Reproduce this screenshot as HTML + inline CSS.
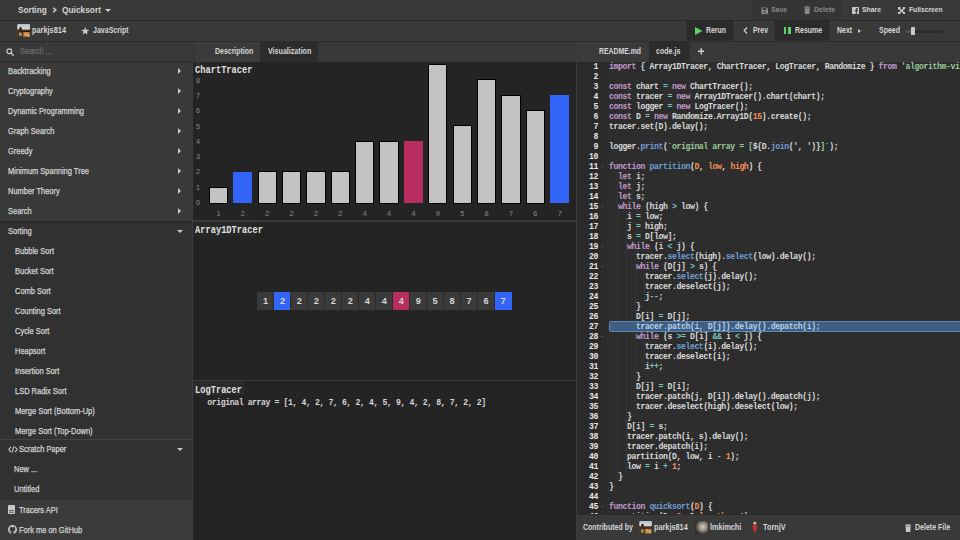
<!DOCTYPE html>
<html><head><meta charset="utf-8">
<style>
*{margin:0;padding:0;box-sizing:border-box}
html,body{width:960px;height:540px;overflow:hidden;background:#393939;font-family:"Liberation Sans",sans-serif;color:#bbb}
.a{position:absolute;white-space:nowrap}
.hdr{position:absolute;left:0;width:960px;background:#393939}
.bd{position:absolute;background:#2b2b2b}
.ht{position:absolute;white-space:nowrap;line-height:10px;font-size:7.1px;font-weight:bold;color:#c8c8c8}
.ht.dim{color:#8a8a8a}
.st{position:absolute;white-space:nowrap;line-height:10px;font-size:8.3px;margin-top:-0.25px;color:#d4d4d4;-webkit-text-stroke-width:0.25px;transform:scaleX(0.9);transform-origin:0 0}
.arr{position:absolute;left:178px;width:0;height:0;border-top:3px solid transparent;border-bottom:3px solid transparent;border-left:3px solid #c8c8c8}
.dn{position:absolute;left:176.8px;width:0;height:0;border-left:3px solid transparent;border-right:3px solid transparent;border-top:3px solid #c8c8c8}
.yl{position:absolute;line-height:10px;font-size:7.3px;color:#8a8a8a;white-space:nowrap}
.xl{position:absolute;width:10px;text-align:center;line-height:10px;font-size:7.3px;color:#8a8a8a}
.tt{position:absolute;white-space:nowrap;line-height:10px;font-family:"Liberation Mono",monospace;font-size:10.3px;color:#e0e0e0;font-weight:bold;transform:scaleX(0.846);transform-origin:0 0}
.cell{position:absolute;top:292px;width:16.97px;height:17.7px;text-align:center;line-height:19.6px;font-size:9.2px;font-weight:bold;color:#d6d6d6}
.lg{position:absolute;white-space:nowrap;line-height:10px;font-family:"Liberation Mono",monospace;font-size:8.2px;letter-spacing:-0.42px;font-weight:bold;color:#d6d6d6}
#code{position:absolute;left:577px;top:62px;width:383px;height:453px;background:#2d2d2d;overflow:hidden}
#code .ln{position:absolute;left:0;width:20.9px;text-align:right;font-size:8.2px;letter-spacing:-0.42px;line-height:10px;color:#e6e6e6;font-weight:bold;font-family:"Liberation Mono",monospace}
#code pre{position:absolute;left:32px;top:0;font-family:"Liberation Mono",monospace;font-size:8.2px;letter-spacing:-0.42px;line-height:10px;color:#dadada;font-weight:bold}
.hl{color:#b8d0ea}.k{color:#c49bd0}.o{color:#74c6c0}.f{color:#6f9fd8}.n{color:#f99157}.s{color:#99cc99}

.tx{position:absolute;white-space:nowrap;line-height:10px;transform-origin:0 0}

</style></head><body>
<div class="hdr" style="top:0;height:20px"></div>
<div class="a" style="left:752px;top:0;width:90px;height:20px;background:#353535"></div>
<div class="bd" style="left:0;top:20px;width:960px;height:1px"></div>
<div class="tx" style="left:17.60px;top:4.72px;font-size:8.6px;font-weight:bold;color:#d6d6d6;transform:scaleX(0.952);">Sorting</div>
<svg class="a" style="left:51.8px;top:6.8px" width="5" height="6" viewBox="0 0 5 6"><path d="M1.1 0.7 L3.8 3 L1.1 5.3" fill="none" stroke="#cfcfcf" stroke-width="1.5"/></svg>
<div class="tx" style="left:62.20px;top:4.72px;font-size:8.6px;font-weight:bold;color:#d6d6d6;transform:scaleX(0.971);">Quicksort</div>
<div class="a" style="left:105.3px;top:8.6px;width:0;height:0;border-left:3.1px solid transparent;border-right:3.1px solid transparent;border-top:3.6px solid #d6d6d6"></div>
<svg class="a" style="left:760.5px;top:6.5px" width="7.4" height="7.4" viewBox="0 0 8 8"><path d="M0.5 1 Q0.5 0.5 1 0.5 L6.3 0.5 L7.5 1.7 L7.5 7 Q7.5 7.5 7 7.5 L1 7.5 Q0.5 7.5 0.5 7 Z" fill="#8a8a8a"/><rect x="1.8" y="1.2" width="4" height="2" fill="#353535"/><circle cx="4" cy="5.4" r="1" fill="#353535"/></svg>
<div class="tx" style="left:771.30px;top:5.23px;font-size:7.7px;font-weight:bold;color:#8a8a8a;transform:scaleX(0.895);">Save</div>
<svg class="a" style="left:804px;top:6px" width="6.4" height="8" viewBox="0 0 6.4 8"><rect x="0" y="0.6" width="6.4" height="1.1" fill="#8a8a8a"/><rect x="2.2" y="0" width="2" height="0.8" fill="#8a8a8a"/><path d="M0.6 2.2 L5.8 2.2 L5.4 8 L1 8 Z" fill="#8a8a8a"/></svg>
<div class="tx" style="left:814.30px;top:5.23px;font-size:7.7px;font-weight:bold;color:#8a8a8a;transform:scaleX(0.918);">Delete</div>
<svg class="a" style="left:851.8px;top:6.9px" width="7" height="7" viewBox="0 0 7 7"><rect x="0" y="0" width="7" height="7" rx="0.6" fill="#c8c8c8"/><path d="M4.9 7 L4.9 4.2 L5.9 4.2 L6 3.1 L4.9 3.1 L4.9 2.5 Q4.9 2 5.4 2 L6 2 L6 1 L5.1 1 Q3.8 1 3.8 2.3 L3.8 3.1 L2.9 3.1 L2.9 4.2 L3.8 4.2 L3.8 7 Z" fill="#393939"/></svg>
<div class="tx" style="left:862.30px;top:5.23px;font-size:7.7px;font-weight:bold;color:#d6d6d6;transform:scaleX(0.888);">Share</div>
<svg class="a" style="left:897.6px;top:6.8px" width="7.4" height="7.4" viewBox="0 0 8 8"><path d="M0 0 L3.2 0 L0 3.2 Z M8 0 L8 3.2 L4.8 0 Z M0 8 L0 4.8 L3.2 8 Z M8 8 L4.8 8 L8 4.8 Z" fill="#d0d0d0"/><path d="M1 1 L7 7 M7 1 L1 7" stroke="#d0d0d0" stroke-width="1.5"/></svg>
<div class="tx" style="left:908.80px;top:5.23px;font-size:7.7px;font-weight:bold;color:#d6d6d6;transform:scaleX(0.873);">Fullscreen</div>
<div class="hdr" style="top:21px;height:20px"></div>
<div class="bd" style="left:0;top:41px;width:960px;height:1px"></div>
<svg class="a" style="left:16.6px;top:23.8px" width="13.4" height="13" viewBox="0 0 13 13"><defs><linearGradient id="sky" x1="0" y1="0" x2="0" y2="1"><stop offset="0" stop-color="#aebfd8"/><stop offset="1" stop-color="#e0dcd8"/></linearGradient></defs><rect width="13" height="13" rx="1" fill="#5a3a22"/><rect width="13" height="5.5" rx="1" fill="url(#sky)"/><circle cx="3.4" cy="4.6" r="1.4" fill="#2a1a12"/><rect x="1.5" y="5.6" width="3.5" height="7.4" fill="#3a2a1a"/><rect x="1.8" y="8.5" width="2.8" height="3.5" fill="#a09060"/><rect x="5.5" y="6.8" width="7.5" height="1.2" fill="#2a1a10"/><path d="M6 8 L12.5 8 L12.5 13 L6 13 Z" fill="#b07a40"/><circle cx="8.5" cy="10" r="1.6" fill="#d8a060"/><circle cx="11" cy="11.2" r="1.3" fill="#e0b070"/></svg>
<div class="tx" style="left:31.90px;top:25.35px;font-size:8.5px;font-weight:bold;color:#d6d6d6;transform:scaleX(0.867);">parkjs814</div>
<svg class="a" style="left:81px;top:27px" width="8.4" height="8" viewBox="0 0 24 23"><path d="M12 0 L15.1 7.6 L23.4 8.3 L17.1 13.7 L19 21.8 L12 17.5 L5 21.8 L6.9 13.7 L0.6 8.3 L8.9 7.6 Z" fill="#c8c8c8"/></svg>
<div class="tx" style="left:92.80px;top:25.35px;font-size:8.5px;font-weight:bold;color:#d6d6d6;transform:scaleX(0.828);">JavaScript</div>
<div class="a" style="left:686.7px;top:21px;width:46.6px;height:18.7px;background:#2b2b2b;box-shadow:0 0 1px rgba(0,0,0,.5)"></div>
<svg class="a" style="left:695px;top:26.7px" width="7.5" height="8" viewBox="0 0 7.5 8"><path d="M0 0 L7.5 4 L0 8 Z" fill="#5ed36a"/></svg>
<div class="tx" style="left:705.80px;top:25.35px;font-size:8.5px;font-weight:bold;color:#d6d6d6;transform:scaleX(0.814);">Rerun</div>
<svg class="a" style="left:743px;top:27px" width="5" height="7" viewBox="0 0 5 7"><path d="M4 0.6 L1.2 3.5 L4 6.4" fill="none" stroke="#c8c8c8" stroke-width="1.4"/></svg>
<div class="tx" style="left:752.50px;top:25.35px;font-size:8.5px;font-weight:bold;color:#d6d6d6;transform:scaleX(0.813);">Prev</div>
<div class="a" style="left:775.3px;top:21px;width:53.5px;height:18.7px;background:#2b2b2b;box-shadow:0 0 1px rgba(0,0,0,.5)"></div>
<div class="a" style="left:783.7px;top:27.2px;width:2.8px;height:7.1px;background:#5ed36a"></div>
<div class="a" style="left:788px;top:27.2px;width:2.8px;height:7.1px;background:#5ed36a"></div>
<div class="tx" style="left:794.70px;top:25.15px;font-size:8.5px;font-weight:bold;color:#d6d6d6;transform:scaleX(0.823);">Resume</div>
<div class="tx" style="left:836.80px;top:25.35px;font-size:8.5px;font-weight:bold;color:#d6d6d6;transform:scaleX(0.824);">Next</div>
<svg class="a" style="left:858px;top:29px" width="3" height="4" viewBox="0 0 3 4"><path d="M0 0 L3 2 L0 4 Z" fill="#c8c8c8"/></svg>
<div class="tx" style="left:879.00px;top:25.35px;font-size:8.5px;font-weight:bold;color:#d6d6d6;transform:scaleX(0.824);">Speed</div>
<div class="a" style="left:905.3px;top:29.5px;width:38px;height:3.2px;background:#2c2c2c;border-radius:1.6px"></div>
<div class="a" style="left:905.3px;top:29.5px;width:6px;height:3.2px;background:#505050;border-radius:1.6px 0 0 1.6px"></div>
<div class="a" style="left:910.7px;top:27.4px;width:4.3px;height:7.6px;background:#c8c8c8;border-radius:0.5px"></div>
<div style="position:absolute;left:0;top:42px;width:192px;height:498px;background:#393939"></div>
<svg class="a" style="left:6px;top:47.5px" width="8" height="8" viewBox="0 0 8 8"><circle cx="3.3" cy="3.3" r="2.4" fill="none" stroke="#c8c8c8" stroke-width="1.2"/><line x1="5" y1="5" x2="7.2" y2="7.2" stroke="#c8c8c8" stroke-width="1.5" stroke-linecap="round"/></svg>
<div class="st" style="left:19.5px;top:46px;color:#6a6a6a">Search ...</div>
<div class="bd" style="left:0;top:61px;width:192px;height:1px"></div>
<div class="st" style="left:7.5px;top:66.7px">Backtracking</div><i class="arr" style="top:68.3px"></i>
<div class="st" style="left:7.5px;top:86.7px">Cryptography</div><i class="arr" style="top:88.3px"></i>
<div class="st" style="left:7.5px;top:106.7px">Dynamic Programming</div><i class="arr" style="top:108.3px"></i>
<div class="st" style="left:7.5px;top:126.7px">Graph Search</div><i class="arr" style="top:128.3px"></i>
<div class="st" style="left:7.5px;top:146.7px">Greedy</div><i class="arr" style="top:148.3px"></i>
<div class="st" style="left:7.5px;top:166.7px">Minimum Spanning Tree</div><i class="arr" style="top:168.3px"></i>
<div class="st" style="left:7.5px;top:186.7px">Number Theory</div><i class="arr" style="top:188.3px"></i>
<div class="st" style="left:7.5px;top:206.7px">Search</div><i class="arr" style="top:208.3px"></i>
<div style="position:absolute;left:0;top:221px;width:192px;height:279px;background:#313131;box-shadow:inset 0 2px 2px -1px rgba(0,0,0,.25)"></div>
<div class="st" style="left:7.5px;top:226.7px">Sorting</div><i class="dn" style="top:230.3px"></i>
<div class="st" style="left:15px;top:246.5px">Bubble Sort</div>
<div class="st" style="left:15px;top:266.5px">Bucket Sort</div>
<div class="st" style="left:15px;top:286.5px">Comb Sort</div>
<div class="st" style="left:15px;top:306.5px">Counting Sort</div>
<div class="st" style="left:15px;top:326.5px">Cycle Sort</div>
<div class="st" style="left:15px;top:346.5px">Heapsort</div>
<div class="st" style="left:15px;top:366.5px">Insertion Sort</div>
<div class="st" style="left:15px;top:386.5px">LSD Radix Sort</div>
<div class="st" style="left:15px;top:406.5px">Merge Sort (Bottom-Up)</div>
<div class="st" style="left:15px;top:426.5px">Merge Sort (Top-Down)</div>
<div class="bd" style="left:0;top:439px;width:192px;height:1px;background:#444"></div>
<svg class="a" style="left:7.5px;top:445.5px" width="10" height="7" viewBox="0 0 10 7"><path d="M3 0.8 L0.8 3.5 L3 6.2 M7 0.8 L9.2 3.5 L7 6.2 M5.9 0.3 L4.1 6.7" fill="none" stroke="#c8c8c8" stroke-width="1.1"/></svg>
<div class="st" style="left:19.4px;top:444px">Scratch Paper</div><i class="dn" style="top:448px"></i>
<div class="st" style="left:14.4px;top:464px">New ...</div>
<div class="st" style="left:14.4px;top:484px">Untitled</div>
<div style="position:absolute;left:0;top:500px;width:192px;height:40px;background:#3b3b3b"></div>
<svg class="a" style="left:8.4px;top:505px" width="7" height="9" viewBox="0 0 7 9"><rect x="0" y="0" width="7" height="9" rx="1" fill="#c8c8c8"/><rect x="1.2" y="5.3" width="4.6" height="0.9" fill="#3b3b3b"/><rect x="1.2" y="7" width="4.6" height="0.6" fill="#3b3b3b"/></svg>
<div class="st" style="left:19.3px;top:505px">Tracers API</div>
<svg class="a" style="left:7.8px;top:524.8px" width="9" height="9" viewBox="0 0 16 16"><path fill="#c8c8c8" d="M8 0C3.58 0 0 3.58 0 8c0 3.54 2.29 6.53 5.47 7.59.4.07.55-.17.55-.38 0-.19-.01-.82-.01-1.49-2.01.37-2.53-.49-2.69-.94-.09-.23-.48-.94-.82-1.13-.28-.15-.68-.52-.01-.53.63-.01 1.08.58 1.23.82.72 1.21 1.87.87 2.33.66.07-.52.28-.87.51-1.07-1.78-.2-3.64-.89-3.640-3.95 0-.87.31-1.590.82-2.15-.08-.2-.36-1.02.08-2.12 0 0 .67-.21 2.2.82.64-.18 1.32-.27 2-.27.68 0 1.36.09 2 .27 1.53-1.04 2.2-.82 2.2-.82.44 1.1.16 1.92.08 2.12.51.56.82 1.27.82 2.15 0 3.07-1.87 3.75-3.65 3.95.29.25.54.73.54 1.48 0 1.07-.01 1.93-.01 2.2 0 .21.15.46.55.38A8.013 8.013 0 0016 8c0-4.42-3.58-8-8-8z"/></svg>
<div class="st" style="left:19.3px;top:525px">Fork me on GitHub</div>
<div class="bd" style="left:192px;top:42px;width:1px;height:498px;background:#3c3c3c"></div>
<div class="a" style="left:193px;top:42px;width:383px;height:20px;background:#393939"></div>
<div class="a" style="left:193px;top:42px;width:66.8px;height:20px;background:#3b3b3b;border-left:1px solid #303030"></div>
<div class="a" style="left:259.7px;top:42px;width:58px;height:20px;background:#2c2c2c"></div>
<div class="a" style="left:317.6px;top:42px;width:1px;height:20px;background:#333"></div>
<div class="tx" style="left:214.60px;top:46.25px;font-size:8.5px;font-weight:bold;color:#d6d6d6;transform:scaleX(0.819);">Description</div>
<div class="tx" style="left:267.50px;top:46.25px;font-size:8.5px;font-weight:bold;color:#d6d6d6;transform:scaleX(0.836);">Visualization</div>
<div class="a" style="left:193px;top:62px;width:383px;height:478px;background:#242424"></div>
<div class="yl" style="left:196px;top:198.10px">0</div>
<div class="yl" style="left:196px;top:182.78px">1</div>
<div class="yl" style="left:196px;top:167.46px">2</div>
<div class="yl" style="left:196px;top:152.14px">3</div>
<div class="yl" style="left:196px;top:136.82px">4</div>
<div class="yl" style="left:196px;top:121.50px">5</div>
<div class="yl" style="left:196px;top:106.18px">6</div>
<div class="yl" style="left:196px;top:90.86px">7</div>
<div class="yl" style="left:196px;top:75.54px">8</div>
<div class="yl" style="left:196px;top:60.22px">9</div>
<div class="a" style="left:208.90px;top:186.68px;width:19.2px;height:16.92px;background:#c3c3c3;border:0.9px solid #000"></div>
<div class="xl" style="left:213.50px;top:208.6px">1</div>
<div class="a" style="left:233.47px;top:171.96px;width:18.8px;height:30.64px;background:#3366f8"></div>
<div class="xl" style="left:237.87px;top:208.6px">2</div>
<div class="a" style="left:257.64px;top:171.36px;width:19.2px;height:32.24px;background:#c3c3c3;border:0.9px solid #000"></div>
<div class="xl" style="left:262.24px;top:208.6px">2</div>
<div class="a" style="left:282.01px;top:171.36px;width:19.2px;height:32.24px;background:#c3c3c3;border:0.9px solid #000"></div>
<div class="xl" style="left:286.61px;top:208.6px">2</div>
<div class="a" style="left:306.38px;top:171.36px;width:19.2px;height:32.24px;background:#c3c3c3;border:0.9px solid #000"></div>
<div class="xl" style="left:310.98px;top:208.6px">2</div>
<div class="a" style="left:330.75px;top:171.36px;width:19.2px;height:32.24px;background:#c3c3c3;border:0.9px solid #000"></div>
<div class="xl" style="left:335.35px;top:208.6px">2</div>
<div class="a" style="left:355.12px;top:140.72px;width:19.2px;height:62.88px;background:#c3c3c3;border:0.9px solid #000"></div>
<div class="xl" style="left:359.72px;top:208.6px">4</div>
<div class="a" style="left:379.49px;top:140.72px;width:19.2px;height:62.88px;background:#c3c3c3;border:0.9px solid #000"></div>
<div class="xl" style="left:384.09px;top:208.6px">4</div>
<div class="a" style="left:404.06px;top:141.32px;width:18.8px;height:61.28px;background:#b82d60"></div>
<div class="xl" style="left:408.46px;top:208.6px">4</div>
<div class="a" style="left:428.23px;top:64.12px;width:19.2px;height:139.48px;background:#c3c3c3;border:0.9px solid #000"></div>
<div class="xl" style="left:432.83px;top:208.6px">9</div>
<div class="a" style="left:452.60px;top:125.40px;width:19.2px;height:78.20px;background:#c3c3c3;border:0.9px solid #000"></div>
<div class="xl" style="left:457.20px;top:208.6px">5</div>
<div class="a" style="left:476.97px;top:79.44px;width:19.2px;height:124.16px;background:#c3c3c3;border:0.9px solid #000"></div>
<div class="xl" style="left:481.57px;top:208.6px">8</div>
<div class="a" style="left:501.34px;top:94.76px;width:19.2px;height:108.84px;background:#c3c3c3;border:0.9px solid #000"></div>
<div class="xl" style="left:505.94px;top:208.6px">7</div>
<div class="a" style="left:525.71px;top:110.08px;width:19.2px;height:93.52px;background:#c3c3c3;border:0.9px solid #000"></div>
<div class="xl" style="left:530.31px;top:208.6px">6</div>
<div class="a" style="left:550.28px;top:95.36px;width:18.8px;height:107.24px;background:#3366f8"></div>
<div class="xl" style="left:554.68px;top:208.6px">7</div>
<div class="a" style="left:193px;top:62px;width:62px;height:14px;background:rgba(36,36,36,.75)"></div>
<div class="tt" style="left:195px;top:64.9px">ChartTracer</div>
<div class="a" style="left:193px;top:220px;width:383px;height:1.6px;background:#3a3a3a"></div>
<div class="a" style="left:193px;top:222px;width:62px;height:14px;background:#282828"></div>
<div class="tt" style="left:195px;top:224.5px">Array1DTracer</div>
<div class="cell" style="left:257.00px;background:#3a3a3a">1</div>
<div class="cell" style="left:273.97px;background:#3366f8">2</div>
<div class="a" style="left:273.47px;top:292px;width:0.9px;height:17.7px;background:#2a2a2a"></div>
<div class="cell" style="left:290.94px;background:#3a3a3a">2</div>
<div class="a" style="left:290.44px;top:292px;width:0.9px;height:17.7px;background:#2a2a2a"></div>
<div class="cell" style="left:307.91px;background:#3a3a3a">2</div>
<div class="a" style="left:307.41px;top:292px;width:0.9px;height:17.7px;background:#2a2a2a"></div>
<div class="cell" style="left:324.88px;background:#3a3a3a">2</div>
<div class="a" style="left:324.38px;top:292px;width:0.9px;height:17.7px;background:#2a2a2a"></div>
<div class="cell" style="left:341.85px;background:#3a3a3a">2</div>
<div class="a" style="left:341.35px;top:292px;width:0.9px;height:17.7px;background:#2a2a2a"></div>
<div class="cell" style="left:358.82px;background:#3a3a3a">4</div>
<div class="a" style="left:358.32px;top:292px;width:0.9px;height:17.7px;background:#2a2a2a"></div>
<div class="cell" style="left:375.79px;background:#3a3a3a">4</div>
<div class="a" style="left:375.29px;top:292px;width:0.9px;height:17.7px;background:#2a2a2a"></div>
<div class="cell" style="left:392.76px;background:#b82d60">4</div>
<div class="a" style="left:392.26px;top:292px;width:0.9px;height:17.7px;background:#2a2a2a"></div>
<div class="cell" style="left:409.73px;background:#3a3a3a">9</div>
<div class="a" style="left:409.23px;top:292px;width:0.9px;height:17.7px;background:#2a2a2a"></div>
<div class="cell" style="left:426.70px;background:#3a3a3a">5</div>
<div class="a" style="left:426.20px;top:292px;width:0.9px;height:17.7px;background:#2a2a2a"></div>
<div class="cell" style="left:443.67px;background:#3a3a3a">8</div>
<div class="a" style="left:443.17px;top:292px;width:0.9px;height:17.7px;background:#2a2a2a"></div>
<div class="cell" style="left:460.64px;background:#3a3a3a">7</div>
<div class="a" style="left:460.14px;top:292px;width:0.9px;height:17.7px;background:#2a2a2a"></div>
<div class="cell" style="left:477.61px;background:#3a3a3a">6</div>
<div class="a" style="left:477.11px;top:292px;width:0.9px;height:17.7px;background:#2a2a2a"></div>
<div class="cell" style="left:494.58px;background:#3366f8">7</div>
<div class="a" style="left:494.08px;top:292px;width:0.9px;height:17.7px;background:#2a2a2a"></div>
<div class="a" style="left:193px;top:380px;width:383px;height:1px;background:#3a3a3a"></div>
<div class="a" style="left:193px;top:381px;width:51px;height:14px;background:#2a2a2a"></div>
<div class="tt" style="left:194.7px;top:384.7px">LogTracer</div>
<div class="lg" style="left:207.2px;top:398px">original array = [1, 4, 2, 7, 6, 2, 4, 5, 9, 4, 2, 8, 7, 2, 2]</div>
<div class="a" style="left:576px;top:42px;width:1px;height:498px;background:#3c3c3c"></div>
<div class="a" style="left:577px;top:42px;width:383px;height:20px;background:#393939"></div>
<div class="a" style="left:577px;top:42px;width:72px;height:20px;background:#3b3b3b"></div>
<div class="a" style="left:648.9px;top:42px;width:39.7px;height:20px;background:#2c2c2c"></div>
<div class="a" style="left:688.6px;top:42px;width:1px;height:20px;background:#333"></div>
<div class="tx" style="left:599.00px;top:45.95px;font-size:8.5px;font-weight:bold;color:#d6d6d6;transform:scaleX(0.807);">README.md</div>
<div class="tx" style="left:655.90px;top:45.95px;font-size:8.5px;font-weight:bold;color:#d6d6d6;transform:scaleX(0.833);">code.js</div>
<svg class="a" style="left:697.8px;top:48.2px" width="6.5" height="6.5" viewBox="0 0 6.5 6.5"><path d="M3.25 0 V6.5 M0 3.25 H6.5" stroke="#d0d0d0" stroke-width="1.3"/></svg>
<div id="code">
<div class="a" style="left:0;top:0;width:30px;height:453px;background:#2a2a2a"></div>
<div class="ln" style="top:0px">1</div>
<div class="ln" style="top:10px">2</div>
<div class="ln" style="top:20px">3</div>
<div class="ln" style="top:30px">4</div>
<div class="ln" style="top:40px">5</div>
<div class="ln" style="top:50px">6</div>
<div class="ln" style="top:60px">7</div>
<div class="ln" style="top:70px">8</div>
<div class="ln" style="top:80px">9</div>
<div class="ln" style="top:90px">10</div>
<div class="ln" style="top:100px">11</div>
<div class="a" style="left:24px;top:104.2px;width:0;height:0;border-left:1.7px solid transparent;border-right:1.7px solid transparent;border-top:1.8px solid #777"></div>
<div class="ln" style="top:110px">12</div>
<div class="a" style="left:40.2px;top:110px;width:0.8px;height:10px;background:#353535"></div>
<div class="ln" style="top:120px">13</div>
<div class="a" style="left:40.2px;top:120px;width:0.8px;height:10px;background:#353535"></div>
<div class="ln" style="top:130px">14</div>
<div class="a" style="left:40.2px;top:130px;width:0.8px;height:10px;background:#353535"></div>
<div class="ln" style="top:140px">15</div>
<div class="a" style="left:24px;top:144.2px;width:0;height:0;border-left:1.7px solid transparent;border-right:1.7px solid transparent;border-top:1.8px solid #777"></div>
<div class="a" style="left:40.2px;top:140px;width:0.8px;height:10px;background:#353535"></div>
<div class="ln" style="top:150px">16</div>
<div class="a" style="left:40.2px;top:150px;width:0.8px;height:10px;background:#353535"></div>
<div class="a" style="left:49.2px;top:150px;width:0.8px;height:10px;background:#353535"></div>
<div class="ln" style="top:160px">17</div>
<div class="a" style="left:40.2px;top:160px;width:0.8px;height:10px;background:#353535"></div>
<div class="a" style="left:49.2px;top:160px;width:0.8px;height:10px;background:#353535"></div>
<div class="ln" style="top:170px">18</div>
<div class="a" style="left:40.2px;top:170px;width:0.8px;height:10px;background:#353535"></div>
<div class="a" style="left:49.2px;top:170px;width:0.8px;height:10px;background:#353535"></div>
<div class="ln" style="top:180px">19</div>
<div class="a" style="left:24px;top:184.2px;width:0;height:0;border-left:1.7px solid transparent;border-right:1.7px solid transparent;border-top:1.8px solid #777"></div>
<div class="a" style="left:40.2px;top:180px;width:0.8px;height:10px;background:#353535"></div>
<div class="a" style="left:49.2px;top:180px;width:0.8px;height:10px;background:#353535"></div>
<div class="ln" style="top:190px">20</div>
<div class="a" style="left:40.2px;top:190px;width:0.8px;height:10px;background:#353535"></div>
<div class="a" style="left:49.2px;top:190px;width:0.8px;height:10px;background:#353535"></div>
<div class="a" style="left:58.2px;top:190px;width:0.8px;height:10px;background:#353535"></div>
<div class="ln" style="top:200px">21</div>
<div class="a" style="left:24px;top:204.2px;width:0;height:0;border-left:1.7px solid transparent;border-right:1.7px solid transparent;border-top:1.8px solid #777"></div>
<div class="a" style="left:40.2px;top:200px;width:0.8px;height:10px;background:#353535"></div>
<div class="a" style="left:49.2px;top:200px;width:0.8px;height:10px;background:#353535"></div>
<div class="a" style="left:58.2px;top:200px;width:0.8px;height:10px;background:#353535"></div>
<div class="ln" style="top:210px">22</div>
<div class="a" style="left:40.2px;top:210px;width:0.8px;height:10px;background:#353535"></div>
<div class="a" style="left:49.2px;top:210px;width:0.8px;height:10px;background:#353535"></div>
<div class="a" style="left:58.2px;top:210px;width:0.8px;height:10px;background:#353535"></div>
<div class="a" style="left:67.2px;top:210px;width:0.8px;height:10px;background:#353535"></div>
<div class="ln" style="top:220px">23</div>
<div class="a" style="left:40.2px;top:220px;width:0.8px;height:10px;background:#353535"></div>
<div class="a" style="left:49.2px;top:220px;width:0.8px;height:10px;background:#353535"></div>
<div class="a" style="left:58.2px;top:220px;width:0.8px;height:10px;background:#353535"></div>
<div class="a" style="left:67.2px;top:220px;width:0.8px;height:10px;background:#353535"></div>
<div class="ln" style="top:230px">24</div>
<div class="a" style="left:40.2px;top:230px;width:0.8px;height:10px;background:#353535"></div>
<div class="a" style="left:49.2px;top:230px;width:0.8px;height:10px;background:#353535"></div>
<div class="a" style="left:58.2px;top:230px;width:0.8px;height:10px;background:#353535"></div>
<div class="a" style="left:67.2px;top:230px;width:0.8px;height:10px;background:#353535"></div>
<div class="ln" style="top:240px">25</div>
<div class="a" style="left:40.2px;top:240px;width:0.8px;height:10px;background:#353535"></div>
<div class="a" style="left:49.2px;top:240px;width:0.8px;height:10px;background:#353535"></div>
<div class="a" style="left:58.2px;top:240px;width:0.8px;height:10px;background:#353535"></div>
<div class="ln" style="top:250px">26</div>
<div class="a" style="left:40.2px;top:250px;width:0.8px;height:10px;background:#353535"></div>
<div class="a" style="left:49.2px;top:250px;width:0.8px;height:10px;background:#353535"></div>
<div class="a" style="left:58.2px;top:250px;width:0.8px;height:10px;background:#353535"></div>
<div class="ln" style="top:260px">27</div>
<div class="a" style="left:40.2px;top:260px;width:0.8px;height:10px;background:#353535"></div>
<div class="a" style="left:49.2px;top:260px;width:0.8px;height:10px;background:#353535"></div>
<div class="a" style="left:58.2px;top:260px;width:0.8px;height:10px;background:#353535"></div>
<div class="ln" style="top:270px">28</div>
<div class="a" style="left:24px;top:274.2px;width:0;height:0;border-left:1.7px solid transparent;border-right:1.7px solid transparent;border-top:1.8px solid #777"></div>
<div class="a" style="left:40.2px;top:270px;width:0.8px;height:10px;background:#353535"></div>
<div class="a" style="left:49.2px;top:270px;width:0.8px;height:10px;background:#353535"></div>
<div class="a" style="left:58.2px;top:270px;width:0.8px;height:10px;background:#353535"></div>
<div class="ln" style="top:280px">29</div>
<div class="a" style="left:40.2px;top:280px;width:0.8px;height:10px;background:#353535"></div>
<div class="a" style="left:49.2px;top:280px;width:0.8px;height:10px;background:#353535"></div>
<div class="a" style="left:58.2px;top:280px;width:0.8px;height:10px;background:#353535"></div>
<div class="a" style="left:67.2px;top:280px;width:0.8px;height:10px;background:#353535"></div>
<div class="ln" style="top:290px">30</div>
<div class="a" style="left:40.2px;top:290px;width:0.8px;height:10px;background:#353535"></div>
<div class="a" style="left:49.2px;top:290px;width:0.8px;height:10px;background:#353535"></div>
<div class="a" style="left:58.2px;top:290px;width:0.8px;height:10px;background:#353535"></div>
<div class="a" style="left:67.2px;top:290px;width:0.8px;height:10px;background:#353535"></div>
<div class="ln" style="top:300px">31</div>
<div class="a" style="left:40.2px;top:300px;width:0.8px;height:10px;background:#353535"></div>
<div class="a" style="left:49.2px;top:300px;width:0.8px;height:10px;background:#353535"></div>
<div class="a" style="left:58.2px;top:300px;width:0.8px;height:10px;background:#353535"></div>
<div class="a" style="left:67.2px;top:300px;width:0.8px;height:10px;background:#353535"></div>
<div class="ln" style="top:310px">32</div>
<div class="a" style="left:40.2px;top:310px;width:0.8px;height:10px;background:#353535"></div>
<div class="a" style="left:49.2px;top:310px;width:0.8px;height:10px;background:#353535"></div>
<div class="a" style="left:58.2px;top:310px;width:0.8px;height:10px;background:#353535"></div>
<div class="ln" style="top:320px">33</div>
<div class="a" style="left:40.2px;top:320px;width:0.8px;height:10px;background:#353535"></div>
<div class="a" style="left:49.2px;top:320px;width:0.8px;height:10px;background:#353535"></div>
<div class="a" style="left:58.2px;top:320px;width:0.8px;height:10px;background:#353535"></div>
<div class="ln" style="top:330px">34</div>
<div class="a" style="left:40.2px;top:330px;width:0.8px;height:10px;background:#353535"></div>
<div class="a" style="left:49.2px;top:330px;width:0.8px;height:10px;background:#353535"></div>
<div class="a" style="left:58.2px;top:330px;width:0.8px;height:10px;background:#353535"></div>
<div class="ln" style="top:340px">35</div>
<div class="a" style="left:40.2px;top:340px;width:0.8px;height:10px;background:#353535"></div>
<div class="a" style="left:49.2px;top:340px;width:0.8px;height:10px;background:#353535"></div>
<div class="a" style="left:58.2px;top:340px;width:0.8px;height:10px;background:#353535"></div>
<div class="ln" style="top:350px">36</div>
<div class="a" style="left:40.2px;top:350px;width:0.8px;height:10px;background:#353535"></div>
<div class="a" style="left:49.2px;top:350px;width:0.8px;height:10px;background:#353535"></div>
<div class="ln" style="top:360px">37</div>
<div class="a" style="left:40.2px;top:360px;width:0.8px;height:10px;background:#353535"></div>
<div class="a" style="left:49.2px;top:360px;width:0.8px;height:10px;background:#353535"></div>
<div class="ln" style="top:370px">38</div>
<div class="a" style="left:40.2px;top:370px;width:0.8px;height:10px;background:#353535"></div>
<div class="a" style="left:49.2px;top:370px;width:0.8px;height:10px;background:#353535"></div>
<div class="ln" style="top:380px">39</div>
<div class="a" style="left:40.2px;top:380px;width:0.8px;height:10px;background:#353535"></div>
<div class="a" style="left:49.2px;top:380px;width:0.8px;height:10px;background:#353535"></div>
<div class="ln" style="top:390px">40</div>
<div class="a" style="left:40.2px;top:390px;width:0.8px;height:10px;background:#353535"></div>
<div class="a" style="left:49.2px;top:390px;width:0.8px;height:10px;background:#353535"></div>
<div class="ln" style="top:400px">41</div>
<div class="a" style="left:40.2px;top:400px;width:0.8px;height:10px;background:#353535"></div>
<div class="a" style="left:49.2px;top:400px;width:0.8px;height:10px;background:#353535"></div>
<div class="ln" style="top:410px">42</div>
<div class="a" style="left:40.2px;top:410px;width:0.8px;height:10px;background:#353535"></div>
<div class="ln" style="top:420px">43</div>
<div class="ln" style="top:430px">44</div>
<div class="ln" style="top:440px">45</div>
<div class="a" style="left:24px;top:444.2px;width:0;height:0;border-left:1.7px solid transparent;border-right:1.7px solid transparent;border-top:1.8px solid #777"></div>
<div class="ln" style="top:450px">46</div>
<div class="a" style="left:40.2px;top:450px;width:0.8px;height:10px;background:#353535"></div>
<div class="ln" style="top:460px">47</div>
<div class="a" style="left:31.8px;top:259.4px;width:360px;height:10.4px;background:#3e5e82;border:1px solid #5d88b3;border-radius:1.5px"></div>
<pre><span class="k">import</span> { Array1DTracer, ChartTracer, LogTracer, Randomize } <span class="k">from</span> <span class="s">&#x27;algorithm-visualizer&#x27;</span>;

<span class="k">const</span> chart <span class="o">=</span> <span class="k">new</span> ChartTracer();
<span class="k">const</span> tracer <span class="o">=</span> <span class="k">new</span> Array1DTracer().chart(chart);
<span class="k">const</span> logger <span class="o">=</span> <span class="k">new</span> LogTracer();
<span class="k">const</span> D <span class="o">=</span> <span class="k">new</span> Randomize.Array1D(<span class="n">15</span>).create();
tracer.set(D).delay();

logger.<span class="f">print</span>(<span class="s">`original array = [</span>${D.<span class="f">join</span>(&#x27;, &#x27;)}<span class="s">]`</span>);

<span class="k">function</span> <span class="f">partition</span>(<span class="n">D</span>, <span class="n">low</span>, <span class="n">high</span>) {
  <span class="k">let</span> i;
  <span class="k">let</span> j;
  <span class="k">let</span> s;
  <span class="k">while</span> (high <span class="o">&gt;</span> low) {
    i <span class="o">=</span> low;
    j <span class="o">=</span> high;
    s <span class="o">=</span> D[low];
    <span class="k">while</span> (i <span class="o">&lt;</span> j) {
      tracer.<span class="f">select</span>(high).<span class="f">select</span>(low).delay();
      <span class="k">while</span> (D[j] <span class="o">&gt;</span> s) {
        tracer.<span class="f">select</span>(j).delay();
        tracer.deselect(j);
        j<span class="o">--</span>;
      }
      D[i] <span class="o">=</span> D[j];
      <span class="hl">tracer.patch(i, D[j]).delay().depatch(i);</span>
      <span class="k">while</span> (s <span class="o">&gt;=</span> D[i] <span class="o">&amp;&amp;</span> i <span class="o">&lt;</span> j) {
        tracer.<span class="f">select</span>(i).delay();
        tracer.deselect(i);
        i<span class="o">++</span>;
      }
      D[j] <span class="o">=</span> D[i];
      tracer.patch(j, D[i]).delay().depatch(j);
      tracer.deselect(high).deselect(low);
    }
    D[i] <span class="o">=</span> s;
    tracer.patch(i, s).delay();
    tracer.depatch(i);
    partition(D, low, i <span class="o">-</span> <span class="n">1</span>);
    low <span class="o">=</span> i <span class="o">+</span> <span class="n">1</span>;
  }
}

<span class="k">function</span> <span class="f">quicksort</span>(<span class="n">D</span>) {
  partition(D, <span class="n">0</span>, D.<span class="n">length</span> <span class="o">-</span> <span class="n">1</span>);
}</pre>
</div>
<div class="a" style="left:577px;top:515px;width:383px;height:25px;background:#393939"></div>
<div class="a" style="left:577px;top:514px;width:383px;height:1px;background:#2a2a2a"></div>
<div class="tx" style="left:582.60px;top:522.15px;font-size:8.5px;font-weight:bold;color:#d6d6d6;transform:scaleX(0.824);">Contributed by</div>
<svg class="a" style="left:639.4px;top:521px" width="13.2" height="12.6" viewBox="0 0 13 13"><defs><linearGradient id="sky" x1="0" y1="0" x2="0" y2="1"><stop offset="0" stop-color="#aebfd8"/><stop offset="1" stop-color="#e0dcd8"/></linearGradient></defs><rect width="13" height="13" rx="1" fill="#5a3a22"/><rect width="13" height="5.5" rx="1" fill="url(#sky)"/><circle cx="3.4" cy="4.6" r="1.4" fill="#2a1a12"/><rect x="1.5" y="5.6" width="3.5" height="7.4" fill="#3a2a1a"/><rect x="1.8" y="8.5" width="2.8" height="3.5" fill="#a09060"/><rect x="5.5" y="6.8" width="7.5" height="1.2" fill="#2a1a10"/><path d="M6 8 L12.5 8 L12.5 13 L6 13 Z" fill="#b07a40"/><circle cx="8.5" cy="10" r="1.6" fill="#d8a060"/><circle cx="11" cy="11.2" r="1.3" fill="#e0b070"/></svg>
<div class="tx" style="left:654.30px;top:522.15px;font-size:8.5px;font-weight:bold;color:#d6d6d6;transform:scaleX(0.859);">parkjs814</div>
<div class="a" style="left:695.2px;top:521px;width:12.5px;height:12.6px;background:radial-gradient(circle at 60% 45%,#d8cfc0 0,#9a8f80 35%,#3a3530 70%,#1e1c1a 100%)"></div>
<div class="tx" style="left:709.90px;top:522.15px;font-size:8.5px;font-weight:bold;color:#d6d6d6;transform:scaleX(0.849);">lmkimchi</div>
<svg class="a" style="left:752px;top:521px" width="5.6" height="12" viewBox="0 0 6 12"><circle cx="3" cy="2" r="1.6" fill="#e0b090"/><path d="M1 4 L5 4 L5.4 8 L4.3 8 L4 11.5 L2 11.5 L1.7 8 L0.6 8 Z" fill="#d03030"/></svg>
<div class="tx" style="left:763.00px;top:522.15px;font-size:8.5px;font-weight:bold;color:#d6d6d6;transform:scaleX(0.860);">TornjV</div>
<svg class="a" style="left:905px;top:523.8px" width="6.3" height="8.1" viewBox="0 0 6.4 8"><rect x="0" y="0.6" width="6.4" height="1.1" fill="#c8c8c8"/><rect x="2.2" y="0" width="2" height="0.8" fill="#c8c8c8"/><path d="M0.6 2.2 L5.8 2.2 L5.4 8 L1 8 Z" fill="#c8c8c8"/></svg>
<div class="tx" style="left:915.00px;top:522.15px;font-size:8.5px;font-weight:bold;color:#d6d6d6;transform:scaleX(0.824);">Delete File</div>
</body></html>
